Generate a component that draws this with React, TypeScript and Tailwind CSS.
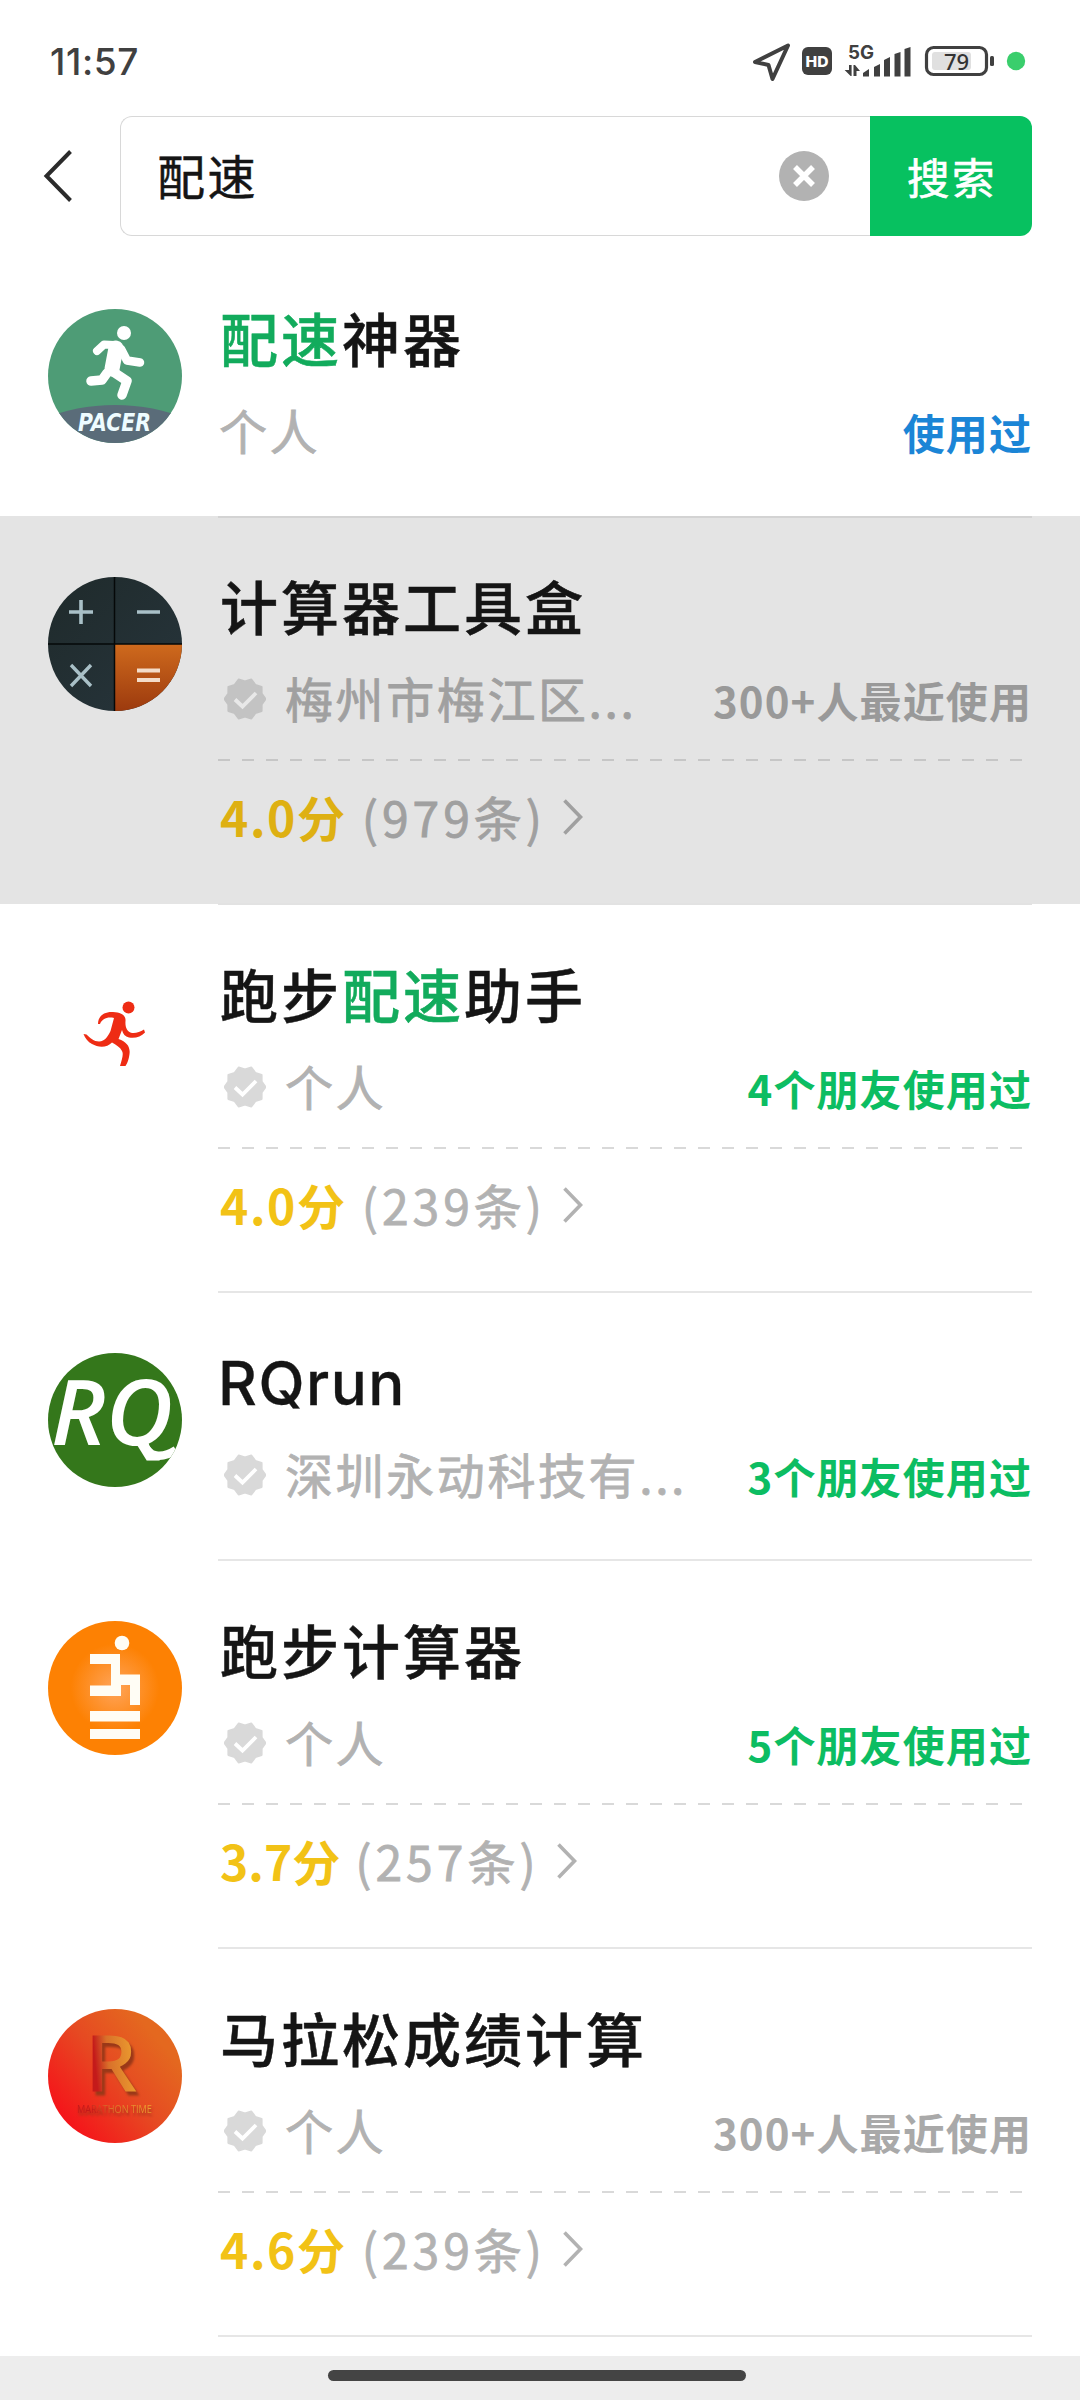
import React from "react";

type RowData = {
  avatar: React.ReactNode;
  title: React.ReactNode;
  latin?: boolean;
  sub: string;
  verified?: boolean;
  note: string;
  tone: "blue" | "gray" | "green";
  score?: string;
  tightScore?: boolean;
  count?: string;
  pressed?: boolean;
};

const Hit = ({ children }: { children: React.ReactNode }) => (
  <span className="text-[#12ab5c]">{children}</span>
);

function PacerAvatar() {
  return (
    <svg viewBox="0 0 134 134" className="size-[134px]">
      <defs>
        <clipPath id="pacer">
          <circle cx="67" cy="67" r="67" />
        </clipPath>
      </defs>
      <g clipPath="url(#pacer)">
        <rect width="134" height="134" fill="#4e9c76" />
        <ellipse cx="67" cy="142" rx="98" ry="46" fill="#5a6c79" />
        <circle cx="76" cy="24" r="7" fill="#fff" />
        <g fill="none" stroke="#fff" strokeLinecap="round" strokeLinejoin="round">
          <path d="M49 42 L56 35.500 L66 36" strokeWidth="8" />
          <path d="M73 40 L79 51.500 L92 53.500" strokeWidth="8.500" />
          <path d="M68 39 L64 60" strokeWidth="15" />
          <path d="M64 62 L79 72 L74 86" strokeWidth="9.500" />
          <path d="M43 72 L54 71 L59 64" strokeWidth="9.500" />
        </g>
        <text x="66.500" y="122" fontSize="24.500" fontWeight="700" fontStyle="italic" fill="#eefcff" textAnchor="middle" textLength="73" lengthAdjust="spacingAndGlyphs" fontFamily="DejaVu Sans, sans-serif">
          PACER
        </text>
      </g>
    </svg>
  );
}

function CalculatorAvatar() {
  return (
    <svg viewBox="0 0 134 134" className="size-[134px]">
      <defs>
        <clipPath id="calc">
          <circle cx="67" cy="67" r="67" />
        </clipPath>
        <linearGradient id="calcOrange" x1="0" y1="0" x2="0" y2="1">
          <stop offset="0" stopColor="#cf6a1d" />
          <stop offset="1" stopColor="#9c3a0e" />
        </linearGradient>
        <linearGradient id="calcDark" x1="0" y1="0" x2="1" y2="1">
          <stop offset="0" stopColor="#1f2a2b" />
          <stop offset="1" stopColor="#27353c" />
        </linearGradient>
      </defs>
      <g clipPath="url(#calc)">
        <rect width="134" height="134" fill="url(#calcDark)" />
        <rect x="67" y="67" width="67" height="67" fill="url(#calcOrange)" />
        <path d="M66.500 0 V134 M0 67 H134" stroke="#050808" strokeWidth="1.500" />
        <path d="M21 35 H45 M33 23 V47 M89 35 H112" stroke="#a9c0c7" strokeWidth="3.600" />
        <path d="M23 88 L43 109 M43 88 L23 109" stroke="#a9c0c7" strokeWidth="3.400" />
        <path d="M89 93.500 H112 M89 103 H112" stroke="#f4dcc8" strokeWidth="3.800" />
      </g>
    </svg>
  );
}

function RedRunnerAvatar() {
  return (
    <svg viewBox="0 0 134 134" className="size-[134px]">
      <g fill="#ee2c14">
        <circle cx="80.500" cy="42.500" r="6" />
        <path d="M50 59 C50 51 56 46.500 65 47 C73 47.500 78 50 77.500 56 C77 62 79 67 84 68 C88 68.500 92 67 96 64.500 L97 67.500 C93 72 87 73.500 81 72.500 C77 71.500 75 69 74 65 L70.500 74 C79 77 82.500 82 81.500 89 C81 94 79 99 77.500 101 L72 101 C73.500 96 76 89 74 86 C72 82 68 80 64 77.500 C59 83 50 82.500 44 79 C40 77 37 73 35.500 69 L38.500 69.500 C42 73 46 76.500 51 76.500 C57 76.500 60 71 62.500 66 L66 53 C59 51.500 54 54 52 59 Z" />
      </g>
    </svg>
  );
}

function RQAvatar() {
  return (
    <svg viewBox="0 0 134 134" className="size-[134px]">
      <defs>
        <clipPath id="rq">
          <circle cx="67" cy="67" r="67" />
        </clipPath>
      </defs>
      <g clipPath="url(#rq)">
        <rect width="134" height="134" fill="#34771b" />
        <text x="3" y="92" fontSize="90" fontWeight="600" fontStyle="italic" fill="#fff" textLength="122" lengthAdjust="spacingAndGlyphs" fontFamily="Open Sans, sans-serif">
          RQ
        </text>
        <path d="M96 90 C100 105 114 106 128 97" fill="none" stroke="#fff" strokeWidth="8.500" />
      </g>
    </svg>
  );
}

function OrangeAvatar() {
  return (
    <svg viewBox="0 0 134 134" className="size-[134px]">
      <defs>
        <radialGradient id="glow" cx="0.5" cy="0.5" r="0.33">
          <stop offset="0" stopColor="#ffa45a" />
          <stop offset="1" stopColor="#fd8103" />
        </radialGradient>
      </defs>
      <circle cx="67" cy="67" r="67" fill="url(#glow)" />
      <g fill="#fffdf5">
        <circle cx="74" cy="22" r="7.300" />
        <path d="M42 33 H72 V53.500 H92 V84 H82 V64 H73 V75 H42 V64.500 H63 V43 H42 Z" />
        <rect x="42" y="90" width="50" height="10.500" />
        <rect x="42" y="108" width="50" height="10" />
      </g>
    </svg>
  );
}

function MarathonAvatar() {
  return (
    <svg viewBox="0 0 134 134" className="size-[134px]">
      <defs>
        <linearGradient id="mara" x1="0.100" y1="0.800" x2="0.800" y2="0.200">
          <stop offset="0" stopColor="#f5141a" />
          <stop offset="0.550" stopColor="#e64a22" />
          <stop offset="1" stopColor="#e4681f" />
        </linearGradient>
        <linearGradient id="gold" x1="0" y1="0.600" x2="1" y2="0.400">
          <stop offset="0.200" stopColor="#c41a1a" />
          <stop offset="0.450" stopColor="#d9702a" />
          <stop offset="1" stopColor="#eda12f" />
        </linearGradient>
      </defs>
      <circle cx="67" cy="67" r="67" fill="url(#mara)" />
      <g fontFamily="Open Sans, sans-serif">
        <g style={{ filter: "drop-shadow(3px 4px 1px #9a3818)" }}>
          <text x="37" y="82" fontSize="78" fontWeight="600" fill="url(#gold)" textLength="52" lengthAdjust="spacingAndGlyphs">R</text>
        </g>
        <g style={{ filter: "drop-shadow(1.5px 3px 1px #a9331a)" }}>
          <text x="29" y="104" fontSize="11" fill="url(#gold)" textLength="75" lengthAdjust="spacingAndGlyphs">MARATHON TIME</text>
        </g>
      </g>
    </svg>
  );
}

const badgePoints = Array.from({ length: 20 }, (_, i) => {
  const a = (Math.PI * i) / 10 - Math.PI / 2 + Math.PI / 10;
  const r = i % 2 === 0 ? 20.5 : 17.5;
  return `${(21 + r * Math.cos(a)).toFixed(2)},${(21 + r * Math.sin(a)).toFixed(2)}`;
}).join(" ");

function Badge({ pressed }: { pressed?: boolean }) {
  return (
    <svg viewBox="0 0 42 42" className={pressed ? "size-[42px] shrink-0 text-[#c3c3c3]" : "size-[42px] shrink-0 text-[#d9d9d9]"}>
      <polygon points={badgePoints} fill="currentColor" stroke="currentColor" strokeWidth="2" strokeLinejoin="round" />
      <path d="M11 21.500 L18.500 28.500 L32 15" fill="none" stroke={pressed ? "#e8e8e8" : "#fff"} strokeWidth="3.800" />
    </svg>
  );
}

const rows: RowData[] = [
  { avatar: <PacerAvatar />, title: <><Hit>配速</Hit>神器</>, sub: "个人", note: "使用过", tone: "blue" },
  { avatar: <CalculatorAvatar />, title: "计算器工具盒", sub: "梅州市梅江区...", verified: true, note: "300+人最近使用", tone: "gray", score: "4.0分", count: "979条", pressed: true },
  { avatar: <RedRunnerAvatar />, title: <>跑步<Hit>配速</Hit>助手</>, sub: "个人", verified: true, note: "4个朋友使用过", tone: "green", score: "4.0分", count: "239条" },
  { avatar: <RQAvatar />, title: "RQrun", latin: true, sub: "深圳永动科技有...", verified: true, note: "3个朋友使用过", tone: "green" },
  { avatar: <OrangeAvatar />, title: "跑步计算器", sub: "个人", verified: true, note: "5个朋友使用过", tone: "green", score: "3.7分", tightScore: true, count: "257条" },
  { avatar: <MarathonAvatar />, title: "马拉松成绩计算", sub: "个人", verified: true, note: "300+人最近使用", tone: "gray", score: "4.6分", count: "239条" },
];

function Row({ r }: { r: RowData }) {
  const muted = r.pressed ? "text-[#a0a0a0]" : "text-[#b2b2b2]";
  const tone =
    r.tone === "blue" ? "text-[#1b85d6]" : r.tone === "green" ? "text-[#0cbd62]" : r.pressed ? "text-[#999999]" : "text-[#a9a9a9]";
  const edge = r.tone === "blue" ? "border-b-0 pt-[53px]" : r.pressed ? "border-t-2 border-b-2 border-t-[#d3d3d3] border-b-[#e2e2e2] pt-[51px]" : "border-b-2 border-[#e6e6e6] pt-[53px]";
  return (
    <li className={`flex pl-[48px] pr-[48px] ${r.pressed ? "bg-[#e4e4e4]" : ""} ${r.score ? "h-[388px]" : "h-[268px]"}`}>
      <div className="w-[170px] shrink-0 pt-[61px]">{r.avatar}</div>
      <div className={`-mb-px flex flex-1 flex-col ${edge}`}>
        <h2 className={`h-[72px] whitespace-nowrap text-[#151515] leading-[72px] ${r.latin ? "pl-0 pt-[2px] font-[Inter] text-[60px] font-medium tracking-[1.5px] [-webkit-text-stroke:0.3px_currentColor]" : "pl-[2px] text-[58px] font-medium tracking-[3px] [-webkit-text-stroke:0.5px_currentColor]"}`}>{r.title}</h2>
        <div className="mt-[28px] flex h-[60px] items-center justify-between whitespace-nowrap">
          <div className={`flex items-center text-[48px] leading-[60px] tracking-[2.6px] [-webkit-text-stroke:0.8px_currentColor] ${muted}`}>
            {r.verified && (
              <span className="-mt-[1px] ml-[6px] mr-[19px]">
                <Badge pressed={r.pressed} />
              </span>
            )}
            <span className={r.verified ? "-mt-[5px]" : "-mt-[5px] ml-px"}>{r.sub}</span>
          </div>
          <div className={`mt-[2px] text-[42px] font-bold leading-[60px] tracking-[1.1px] ${tone}`}>{r.note}</div>
        </div>
        {r.score && (
          <>
            <div className={`mt-[30px] h-[2px] w-[806px] shrink-0 ${r.pressed ? "bg-[repeating-linear-gradient(90deg,#c6c6c6_0_12px,transparent_12px_24px)]" : "bg-[repeating-linear-gradient(90deg,#d9d9d9_0_12px,transparent_12px_24px)]"}`} />
            <div className="mt-[25px] flex h-[60px] items-center text-[48px] leading-[60px]">
              <span className={`ml-[2px] font-bold ${r.tightScore ? "tracking-[0px]" : "tracking-[1.6px]"} ${r.pressed ? "text-[#deb012]" : "text-[#f2c216]"}`}>{r.score}</span>
              <span className={`ml-[15px] tracking-[4px] [-webkit-text-stroke:0.8px_currentColor] ${muted}`}>({r.count})</span>
              <svg viewBox="0 0 20 36" className={`ml-[17px] mt-[2px] h-[36px] w-[20px] ${muted}`}>
                <path d="M1.500 1.500 L17.500 18 L1.500 34.500" fill="none" stroke="currentColor" strokeWidth="3.600" />
              </svg>
            </div>
          </>
        )}
      </div>
    </li>
  );
}

function StatusBar() {
  return (
    <div className="flex h-[116px] items-start justify-between pl-[50px] pr-[54px] pt-[38px] text-[#404040]">
      <div className="h-[48px] font-[Inter] text-[37px] font-medium leading-[48px] tracking-[0.6px]">11:57</div>
      <svg viewBox="0 0 274 48" className="h-[48px] w-[274px]" fontFamily="Inter, sans-serif">
        <path d="M3 24 L36 7.500 L20.500 41 L16.500 27 Z" fill="none" stroke="#404040" strokeWidth="4" strokeLinejoin="round" />
        <rect x="50" y="9" width="30" height="28" rx="6" fill="#404040" />
        <text x="65" y="28.500" fontSize="15" fontWeight="800" fill="#fff" textAnchor="middle" textLength="23" lengthAdjust="spacingAndGlyphs">HD</text>
        <text x="96" y="20.500" fontSize="18.500" fontWeight="700" fill="#404040" textLength="26" lengthAdjust="spacingAndGlyphs">5G</text>
        <g fill="#404040">
          <path d="M97 27 h2.600 v11 h-1 l-6 -6 h4.400 Z" />
          <path d="M101.500 38 V27 h1.500 l5 6 h-3.500 V38 Z" />
          <path d="M111 38.500 V35 l6 -4 V38.500 Z" />
          <path d="M122 38.500 V29 l6 -3 V38.500 Z" />
          <path d="M132 38.500 V22 l6 -3 V38.500 Z" />
          <path d="M142.500 38.500 V16 l6 -2 V38.500 Z" />
          <path d="M152.500 38.500 V11 l6 -2 V38.500 Z" />
        </g>
        <rect x="174.500" y="9.500" width="60" height="27" rx="7" fill="none" stroke="#404040" strokeWidth="3.200" />
        <rect x="180" y="14" width="39" height="18" rx="3" fill="#e0e0e0" />
        <text x="204.500" y="31.500" fontSize="22" fontWeight="500" fill="#333" textAnchor="middle" fontFamily="Noto Sans, sans-serif">79</text>
        <rect x="238" y="18" width="4" height="10" rx="1.500" fill="#404040" />
        <circle cx="264" cy="23" r="9.200" fill="#3ace6c" />
      </svg>
    </div>
  );
}

export default function App() {
  return (
    <div className="flex h-[2400px] w-[1080px] flex-col overflow-hidden bg-white font-['Noto_Sans_CJK_SC',sans-serif]">
      <StatusBar />
      <header className="flex h-[120px] shrink-0 items-center pr-[48px]">
        <div className="flex h-full w-[120px] shrink-0 items-center pl-[43px]">
          <svg viewBox="0 0 30 52" className="h-[52px] w-[30px]">
            <path d="M27.500 1.500 L3.500 26 L27.500 50.500" fill="none" stroke="#2b2b2b" strokeWidth="4" />
          </svg>
        </div>
        <div className="flex h-full w-[750px] items-center justify-between rounded-l-[12px] border border-r-0 border-[#d8d8d8] pl-[36px] pr-[41px]">
          <span className="-mt-[4px] text-[48px] leading-[60px] tracking-[2.6px] text-[#151515] [-webkit-text-stroke:0.5px_currentColor]">配速</span>
          <svg viewBox="0 0 50 50" className="size-[50px]">
            <circle cx="25" cy="25" r="25" fill="#b2b2b2" />
            <path d="M16 16 L34 34 M34 16 L16 34" stroke="#fff" strokeWidth="5.500" />
          </svg>
        </div>
        <button className="h-full w-[162px] rounded-r-[12px] bg-[#07c160] pl-[2px] text-[42.5px] leading-[60px] tracking-[2.5px] text-white [-webkit-text-stroke:0.7px_currentColor]">搜索</button>
      </header>
      <ul className="mt-[12px] h-[2108px] shrink-0 overflow-hidden">
        {rows.map((r, i) => (
          <Row key={i} r={r} />
        ))}
      </ul>
      <footer className="flex h-[44px] shrink-0 justify-center bg-[#ededed] pr-[6px] pt-[14px]">
        <div className="h-[11px] w-[418px] rounded-full bg-[#444444]" />
      </footer>
    </div>
  );
}
